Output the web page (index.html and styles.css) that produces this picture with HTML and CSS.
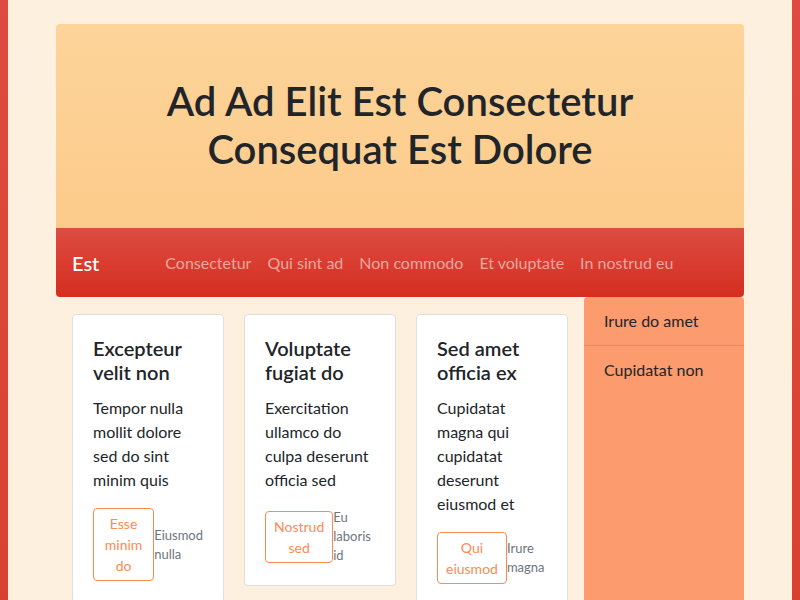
FILE: index.html
```html
<!DOCTYPE html>
<html lang="la">
<head>
<meta charset="utf-8">
<title>Ad Ad Elit Est</title>
<link rel="stylesheet" href="styles.css">
</head>
<body>
<div class="frame">
  <div class="container">
    <header class="hero">
      <h1 class="hero-title">Ad Ad Elit Est Consectetur Consequat Est Dolore</h1>
    </header>
    <nav class="navbar">
      <span class="brand">Est</span>
      <ul class="nav-links">
        <li><a href="#">Consectetur</a></li>
        <li><a href="#">Qui sint ad</a></li>
        <li><a href="#">Non commodo</a></li>
        <li><a href="#">Et voluptate</a></li>
        <li><a href="#">In nostrud eu</a></li>
      </ul>
    </nav>
    <div class="main">
      <section class="cards">
        <article class="card">
          <h2 class="card-title">Excepteur velit non</h2>
          <p class="card-text">Tempor nulla mollit dolore sed do sint minim quis</p>
          <div class="card-foot">
            <button class="btn">Esse minim do</button>
            <small class="note">Eiusmod nulla</small>
          </div>
        </article>
        <article class="card">
          <h2 class="card-title">Voluptate fugiat do</h2>
          <p class="card-text">Exercitation ullamco do culpa deserunt officia sed</p>
          <div class="card-foot">
            <button class="btn">Nostrud sed</button>
            <small class="note">Eu laboris id</small>
          </div>
        </article>
        <article class="card">
          <h2 class="card-title">Sed amet officia ex</h2>
          <p class="card-text">Cupidatat magna qui cupidatat deserunt eiusmod et</p>
          <div class="card-foot">
            <button class="btn">Qui eiusmod</button>
            <small class="note">Irure magna</small>
          </div>
        </article>
      </section>
      <aside class="sidebar">
        <div class="side-item">Irure do amet</div>
        <div class="side-item">Cupidatat non</div>
      </aside>
    </div>
  </div>
</div>
</body>
</html>
```

FILE: styles.css
```css
* { box-sizing: border-box; }
html, body { margin: 0; padding: 0; }
body {
  font-family: "Lato", "Open Sans", sans-serif;
  color: #212529;
  background: linear-gradient(#df4b41, #d9412f);
  height: 600px;
  overflow: hidden;
}
.frame {
  margin: 0 8px;
  background: #fdf0df;
  height: 600px;
  padding-top: 24px;
}
.container {
  width: 688px;
  margin: 0 auto;
}
.hero {
  background: linear-gradient(#fdd49a, #fccb8b);
  border-radius: 4px 4px 0 0;
  padding: 53px 40px 55px;
  text-align: center;
}
.hero-title {
  margin: 0;
  font-size: 40px;
  line-height: 48px;
  font-weight: 600;
}
.navbar {
  display: flex;
  align-items: center;
  height: 69px;
  padding: 0 16px;
  background: linear-gradient(#dd4c42, #d52e1f);
  border-radius: 0 0 4px 4px;
}
.brand {
  color: #fff;
  font-size: 20px;
  font-weight: 500;
  margin-right: 66px;
}
.nav-links {
  list-style: none;
  display: flex;
  gap: 16px;
  margin: 0;
  padding: 0;
}
.nav-links a {
  color: rgba(255, 255, 255, 0.55);
  text-decoration: none;
  font-size: 16px;
}
.main {
  display: flex;
  align-items: flex-start;
}
.cards {
  flex: 1;
  display: grid;
  grid-template-columns: repeat(3, 1fr);
  gap: 20px;
  padding: 17px 16px 16px;
  align-items: start;
}
.card {
  background: #fff;
  border: 1px solid #dedede;
  border-radius: 4px;
  padding: 21px 20px 20px;
}
.card-title {
  margin: 0 0 12px;
  font-size: 20px;
  line-height: 24px;
  font-weight: 600;
}
.card-text {
  margin: 0 0 16px;
  font-size: 16px;
  line-height: 24px;
}
.card-foot {
  display: flex;
  align-items: center;
}
.btn {
  font-family: inherit;
  font-size: 14px;
  line-height: 21px;
  color: #fd8a53;
  background: transparent;
  border: 1px solid #fd8a53;
  border-radius: 4px;
  padding: 4px 8px;
  text-align: center;
}
.note {
  font-size: 13px;
  line-height: 19px;
  color: #6c757d;
}
.sidebar {
  width: 160px;
  height: 303px;
  background: #fc9b6d;
  border-radius: 4px 4px 0 0;
}
.side-item {
  padding: 12px 20px;
  font-size: 16px;
  line-height: 24px;
  border-bottom: 1px solid rgba(0, 0, 0, 0.1);
}
.side-item:last-child { border-bottom: none; }
```
